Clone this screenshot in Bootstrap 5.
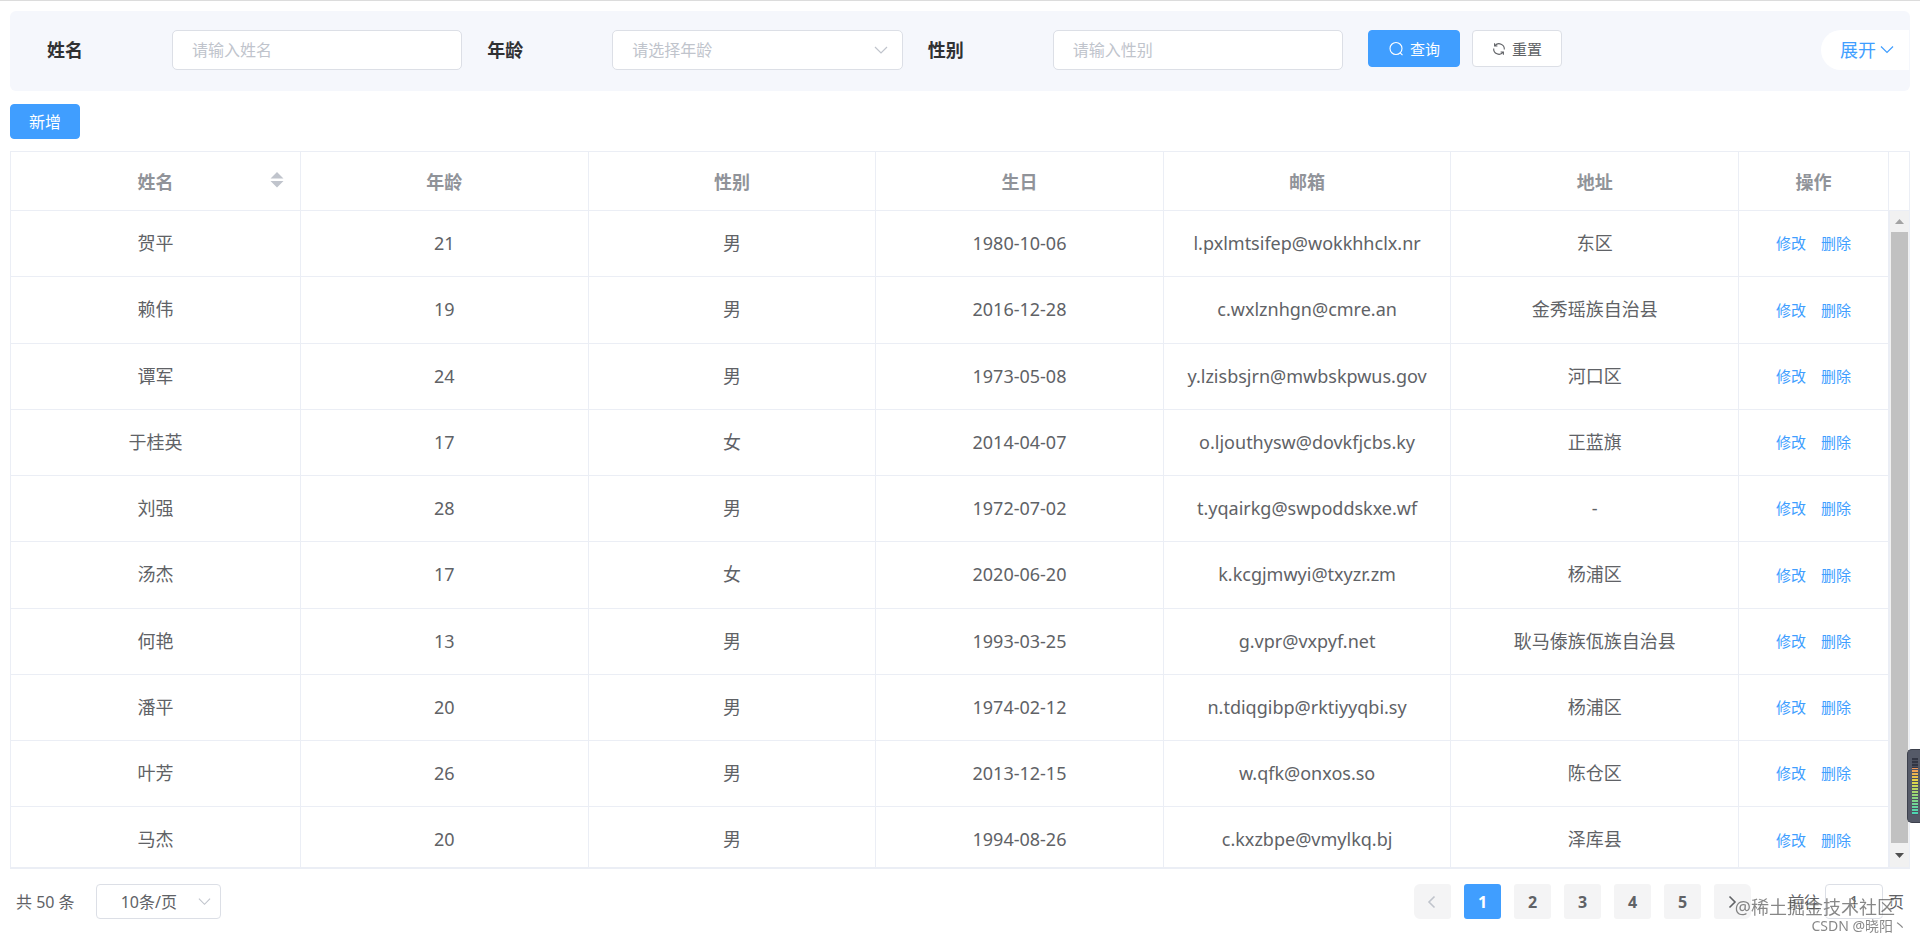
<!DOCTYPE html>
<html lang="zh-CN">
<head>
<meta charset="utf-8">
<meta name="viewport" content="width=device-width, initial-scale=1">
<title>用户列表</title>
<link href="https://cdn.jsdelivr.net/npm/bootstrap@5.3.0/dist/css/bootstrap.min.css" rel="stylesheet">
<style>
  :root { --line: #ebeef5; --field-line: #dcdfe6; --main: #409eff; --ink: #606266; --hint: #c0c4cc; }
  body { font-family: "Noto Sans", "Noto Sans CJK SC", sans-serif; font-size: 16px; line-height: 24px; color: var(--ink); border-top: 1px solid #dcdcdc; overflow: hidden; }
  main { min-height: 0; padding: 10px 10px 0; }
  .search-panel { background: #f5f7fc; border-radius: 6px; padding: 19px 1px 21px 37px; }
  .search-item { width: 23.65%; padding-right: 25px; }
  .search-item label { width: 125px; flex-shrink: 0; font-size: 18px; font-weight: 700; color: #303133; }
  .field { height: 40px; padding: 0 19px; font-size: 16px; border: 1px solid var(--field-line); border-radius: 5px; color: var(--ink); background-color: #fff; }
  .field::placeholder { color: var(--hint); }
  select.field { color: var(--hint); background-image: url("data:image/svg+xml,%3Csvg xmlns='http://www.w3.org/2000/svg' viewBox='0 0 14 14'%3E%3Cpath d='M1 4l6 6 6-6' fill='none' stroke='%23c0c4cc' stroke-width='1.2'/%3E%3C/svg%3E"); background-size: 14px 14px; background-position: right 14px center; }
  .btn { --bs-btn-border-radius: 4px; --bs-btn-font-size: 15px; line-height: 20px; }
  .btn-primary { --bs-btn-bg: var(--main); --bs-btn-border-color: var(--main); }
  .btn-reset { --bs-btn-bg: #fff; --bs-btn-border-color: var(--field-line); --bs-btn-color: var(--ink); }
  .tool-pair { gap: 12px; }
  .btn-tool { height: 37px; padding: 0 19px; gap: 6px; }
  .btn-add { height: 35px; padding: 0 18px; font-size: 16px; margin: 13px 0 12px; }
  .btn-expand { height: 40px; width: 88px; gap: 4px; padding: 0 0 0 4px; border: 0; border-radius: 20px 0 0 20px; background: #fff; color: var(--main); font-size: 18px; }
  .grid-frame { min-height: 0; border: 1px solid var(--line); border-bottom-width: 2px; }
  .grid-view { overflow: hidden; }
  .data-grid { table-layout: fixed; border-collapse: separate; border-spacing: 0; font-size: 18px; --bs-table-color: var(--ink); }
  .data-grid th, .data-grid td { padding: 0; text-align: center; vertical-align: middle; border: 0 solid var(--line); border-width: 0 1px 1px 0; }
  .data-grid th { height: 59px; padding-top: 2px; color: #909399; font-weight: 700; }
  .data-grid td { height: 66px; padding-bottom: 2px; color: var(--ink); }
  .data-grid tr:nth-child(4n+2) td { height: 67px; }
  .data-grid a { color: var(--main); font-size: 15px; text-decoration: none; }
  .data-grid a + a { margin-left: 15px; }
  .col-first { width: 290px; }
  .col-action { width: 150px; }
  .sorter { position: absolute; right: 16px; top: 50%; margin-top: -9px; }
  .gutter { width: 20px; }
  .gutter-head { height: 59px; border-bottom: 1px solid var(--line); }
  .track { min-height: 0; background: #f1f1f1; border-left: 1px solid var(--line); }
  .track-arrow { height: 21px; }
  .thumb { background: #c1c1c1; margin: 0 1px; }
  .track-end { height: 24px; }
  .page-bar { padding: 15px 6px 23px 6px; }
  .page-bar select.field { width: 125px; height: 35px; color: var(--ink); padding: 0 24px; margin-left: 21px; border-radius: 4px; background-position: right 9px center; background-size: 13px 13px; }
  .pagination { gap: 14px; --bs-pagination-border-width: 0; }
  .page-item .page-link { width: 37px; height: 35px; padding: 0; border-radius: 3px; background: #f4f4f5; color: var(--ink); font-weight: 700; display: flex; align-items: center; justify-content: center; }
  .page-item.active .page-link { background: var(--main); color: #fff; }
  .page-item.disabled .page-link { color: var(--hint); }
  .jump { margin-left: 37px; gap: 5px; }
  .jump .field { width: 58px; height: 35px; padding: 0; text-align: center; border-radius: 4px; }
  .stamp { position: fixed; color: rgba(70,70,70,.65); text-shadow: 1px 1px 1px rgba(255,255,255,.6); white-space: nowrap; pointer-events: none; }
  .stamp-forum { right: 25px; bottom: 23px; font-size: 18px; }
  .stamp-blog { right: 13px; bottom: 4px; font-size: 14px; }
  .meter { position: fixed; right: 0; top: 749px; width: 13px; height: 74px; background: #555a68; border: 1px solid #3c404c; border-right: 0; border-radius: 5px 0 0 5px; }
  .meter i { display: block; width: 6px; height: 57px; margin: 8px 0 0 4px; background: repeating-linear-gradient(rgba(77,81,94,0) 0 2px, #4d515e 2px 3px), linear-gradient(#323644 0 17%, #f0935a 17%, #e6d545 40%, #96d878 65%, #45d5b8); }
</style>
<script src="https://cdn.jsdelivr.net/npm/bootstrap@5.3.0/dist/js/bootstrap.bundle.min.js"></script>
</head>
<body class="vh-100 d-flex flex-column bg-white">
<main class="d-flex flex-column flex-grow-1">
  <form class="search-panel d-flex align-items-start">
    <div class="search-item d-flex align-items-center"><label for="name">姓名</label><input id="name" class="form-control field flex-fill" type="text" placeholder="请输入姓名"></div>
    <div class="search-item d-flex align-items-center"><label for="age">年龄</label><select id="age" class="form-select field flex-fill"><option>请选择年龄</option></select></div>
    <div class="search-item d-flex align-items-center"><label for="sex">性别</label><input id="sex" class="form-control field flex-fill" type="text" placeholder="请输入性别"></div>
    <div class="tool-pair d-flex">
      <button type="button" class="btn btn-primary btn-tool d-flex align-items-center"><svg width="16" height="16" viewBox="0 0 16 16" fill="none" stroke="currentColor" stroke-width="1.1"><circle cx="8" cy="7.5" r="6"/><path d="M12.2 11.8l2.3 2.4"/></svg>查询</button>
      <button type="button" class="btn btn-reset btn-tool d-flex align-items-center"><svg width="14" height="14" viewBox="0 0 14 14" fill="none" stroke="currentColor" stroke-width="1.1"><path d="M3 3.600A5.300 5.300 0 0 1 12.300 7.500M11 10.400A5.300 5.300 0 0 1 1.700 6.500M2.600 1.200v2.800h2.800M11.400 12.800v-2.800h-2.800"/></svg>重置</button>
    </div>
    <button type="button" class="btn-expand d-flex align-items-center justify-content-center ms-auto">展开<svg width="14" height="14" viewBox="0 0 14 14" fill="none" stroke="currentColor" stroke-width="1.2"><path d="M1 3.5l6 6 6-6"/></svg></button>
  </form>

  <div><button type="button" class="btn btn-primary btn-add">新增</button></div>

  <div class="grid-frame d-flex flex-grow-1">
    <div class="grid-view flex-grow-1">
      <table class="table data-grid mb-0 w-100">
        <colgroup><col class="col-first"><col><col><col><col><col><col class="col-action"></colgroup>
        <thead><tr>
          <th class="position-relative">姓名<svg class="sorter" width="14" height="16" viewBox="0 0 14 16" fill="#c0c4cc"><path d="M7 0l6.5 6.5H.5zM7 15.500l6.500-6.500H.5z"/></svg></th>
          <th>年龄</th><th>性别</th><th>生日</th><th>邮箱</th><th>地址</th><th>操作</th>
        </tr></thead>
        <tbody>
          <tr><td>贺平</td><td>21</td><td>男</td><td>1980-10-06</td><td>l.pxlmtsifep@wokkhhclx.nr</td><td>东区</td><td><a href="#">修改</a><a href="#">删除</a></td></tr>
          <tr><td>赖伟</td><td>19</td><td>男</td><td>2016-12-28</td><td>c.wxlznhgn@cmre.an</td><td>金秀瑶族自治县</td><td><a href="#">修改</a><a href="#">删除</a></td></tr>
          <tr><td>谭军</td><td>24</td><td>男</td><td>1973-05-08</td><td>y.lzisbsjrn@mwbskpwus.gov</td><td>河口区</td><td><a href="#">修改</a><a href="#">删除</a></td></tr>
          <tr><td>于桂英</td><td>17</td><td>女</td><td>2014-04-07</td><td>o.ljouthysw@dovkfjcbs.ky</td><td>正蓝旗</td><td><a href="#">修改</a><a href="#">删除</a></td></tr>
          <tr><td>刘强</td><td>28</td><td>男</td><td>1972-07-02</td><td>t.yqairkg@swpoddskxe.wf</td><td>-</td><td><a href="#">修改</a><a href="#">删除</a></td></tr>
          <tr><td>汤杰</td><td>17</td><td>女</td><td>2020-06-20</td><td>k.kcgjmwyi@txyzr.zm</td><td>杨浦区</td><td><a href="#">修改</a><a href="#">删除</a></td></tr>
          <tr><td>何艳</td><td>13</td><td>男</td><td>1993-03-25</td><td>g.vpr@vxpyf.net</td><td>耿马傣族佤族自治县</td><td><a href="#">修改</a><a href="#">删除</a></td></tr>
          <tr><td>潘平</td><td>20</td><td>男</td><td>1974-02-12</td><td>n.tdiqgibp@rktiyyqbi.sy</td><td>杨浦区</td><td><a href="#">修改</a><a href="#">删除</a></td></tr>
          <tr><td>叶芳</td><td>26</td><td>男</td><td>2013-12-15</td><td>w.qfk@onxos.so</td><td>陈仓区</td><td><a href="#">修改</a><a href="#">删除</a></td></tr>
          <tr><td>马杰</td><td>20</td><td>男</td><td>1994-08-26</td><td>c.kxzbpe@vmylkq.bj</td><td>泽库县</td><td><a href="#">修改</a><a href="#">删除</a></td></tr>
        </tbody>
      </table>
    </div>
    <div class="gutter d-flex flex-column flex-shrink-0">
      <div class="gutter-head"></div>
      <div class="track d-flex flex-column flex-grow-1">
        <div class="track-arrow d-flex align-items-center justify-content-center"><svg width="9" height="5" viewBox="0 0 9 5" fill="#a3a3a3"><path d="M0 5l4.500-5L9 5z"/></svg></div>
        <div class="thumb flex-grow-1"></div>
        <div class="track-end d-flex align-items-center justify-content-center"><svg width="9" height="5" viewBox="0 0 9 5" fill="#505050"><path d="M0 0l4.500 5L9 0z"/></svg></div>
      </div>
    </div>
  </div>

  <div class="page-bar d-flex align-items-center">
    <span>共 50 条</span>
    <select class="form-select field" aria-label="每页条数"><option>10条/页</option></select>
    <nav class="ms-auto" aria-label="分页">
      <ul class="pagination mb-0">
        <li class="page-item disabled"><a class="page-link" href="#" aria-label="上一页"><svg width="14" height="14" viewBox="0 0 14 14" fill="none" stroke="currentColor" stroke-width="1.6"><path d="M9.500 1.500L4 7l5.500 5.500"/></svg></a></li>
        <li class="page-item active"><a class="page-link" href="#">1</a></li>
        <li class="page-item"><a class="page-link" href="#">2</a></li>
        <li class="page-item"><a class="page-link" href="#">3</a></li>
        <li class="page-item"><a class="page-link" href="#">4</a></li>
        <li class="page-item"><a class="page-link" href="#">5</a></li>
        <li class="page-item"><a class="page-link" href="#" aria-label="下一页"><svg width="14" height="14" viewBox="0 0 14 14" fill="none" stroke="currentColor" stroke-width="1.6"><path d="M4.500 1.500L10 7l-5.500 5.500"/></svg></a></li>
      </ul>
    </nav>
    <div class="jump d-flex align-items-center"><label for="page">前往</label><input id="page" class="form-control field" type="text" value="1"><span>页</span></div>
  </div>
</main>
<div class="stamp stamp-forum">@稀土掘金技术社区</div>
<div class="stamp stamp-blog">CSDN @晓阳丶</div>
<div class="meter"><i></i></div>
</body>
</html>
